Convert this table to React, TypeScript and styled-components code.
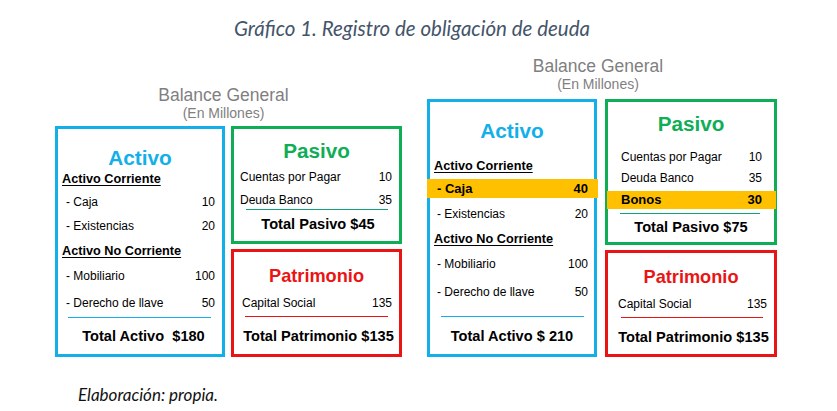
import React from "react";
import styled, { createGlobalStyle } from "styled-components";

const BLUE = "#12afe9";
const GREEN = "#0fae56";
const RED = "#ea1414";
const GOLD = "#ffc000";

const GlobalStyle = createGlobalStyle`
  html, body { margin: 0; padding: 0; background: #ffffff; }
  body { font-family: "Liberation Sans", Arial, sans-serif; color: #000; }
`;

const Page = styled.div`
  width: 837px;
  height: 411px;
  display: flex;
  flex-direction: column;
  overflow: hidden;
`;

const Caption = styled.div`
  margin-top: 16px;
  height: 24px;
  line-height: 24px;
  text-align: center;
  font-family: Lato, "Open Sans", sans-serif;
  font-style: italic;
  font-size: 20.5px;
  color: #44546a;
  padding-right: 13px;
`;

const Figure = styled.div`
  margin-top: 16px;
  display: flex;
  align-items: flex-end;
  padding-left: 55px;
  gap: 25px;
`;

const Balance = styled.div`
  display: flex;
  flex-direction: column;
`;

const Header = styled.div<{ $gap: number; $shift: number }>`
  display: flex;
  flex-direction: column;
  align-items: center;
  margin-bottom: ${(p) => p.$gap}px;
  padding-right: ${(p) => p.$shift}px;
  color: #7f7f7f;
`;

const HeaderTitle = styled.div`
  font-size: 17.5px;
  line-height: 20px;
  height: 20px;
`;

const HeaderSub = styled.div`
  font-size: 14px;
  line-height: 16px;
  height: 16px;
`;

const Boxes = styled.div<{ $gap: number }>`
  display: flex;
  gap: ${(p) => p.$gap}px;
`;

const Column = styled.div`
  display: flex;
  flex-direction: column;
  gap: 5px;
`;

const Box = styled.div<{ $color: string; $w: number; $h: number }>`
  box-sizing: border-box;
  width: ${(p) => p.$w}px;
  height: ${(p) => p.$h}px;
  border: 3px solid ${(p) => p.$color};
  display: flex;
  flex-direction: column;
`;

const BoxTitle = styled.div<{ $color: string; $size: number; $lh: number; $mt: number }>`
  margin-top: ${(p) => p.$mt}px;
  height: ${(p) => p.$lh}px;
  line-height: ${(p) => p.$lh}px;
  font-size: ${(p) => p.$size}px;
  font-weight: 700;
  text-align: center;
  color: ${(p) => p.$color};
`;

const SectionHead = styled.div<{ $mt: number }>`
  margin-top: ${(p) => p.$mt}px;
  padding-left: 4px;
  height: 16px;
  line-height: 16px;
  font-size: 12.7px;
  font-weight: 700;
  text-decoration: underline;
  text-underline-offset: 2px;
`;

const Item = styled.div<{ $mt: number; $pl: number; $pr: number }>`
  margin-top: ${(p) => p.$mt}px;
  padding: 0 ${(p) => p.$pr}px 0 ${(p) => p.$pl}px;
  height: 16px;
  line-height: 16px;
  font-size: 12px;
  display: flex;
  justify-content: space-between;
`;

const Highlight = styled.div<{ $mt: number; $h: number; $ml: number; $mr: number; $pad: number }>`
  margin: ${(p) => p.$mt}px ${(p) => p.$mr}px 0 ${(p) => p.$ml}px;
  padding: 0 ${(p) => p.$pad}px;
  height: ${(p) => p.$h}px;
  line-height: ${(p) => p.$h}px;
  background: ${GOLD};
  font-size: 13px;
  font-weight: 700;
  display: flex;
  justify-content: space-between;
  position: relative;
`;

const Rule = styled.div<{ $color: string; $mt: number; $ml: number; $mr: number }>`
  margin: ${(p) => p.$mt}px ${(p) => p.$mr}px 0 ${(p) => p.$ml}px;
  height: 1px;
  background: ${(p) => p.$color};
`;

const Total = styled.div<{ $mt: number; $shift?: number }>`
  margin-top: ${(p) => p.$mt}px;
  padding-left: ${(p) => p.$shift ?? 0}px;
  height: 18px;
  line-height: 18px;
  font-size: 14.6px;
  font-weight: 700;
  text-align: center;
  white-space: pre;
`;

const Footer = styled.div`
  margin-top: 28px;
  padding-left: 78px;
  height: 20px;
  line-height: 20px;
  font-family: Lato, "Open Sans", sans-serif;
  font-style: italic;
  font-size: 17px;
  color: #111;
`;

const PASIVO_RULE = "#10a37a";

export default function App() {
  return (
    <>
      <GlobalStyle />
      <Page>
        <Caption>Gráfico 1. Registro de obligación de deuda</Caption>
        <Figure>
          <Balance>
            <Header $gap={5} $shift={10}>
              <HeaderTitle>Balance General</HeaderTitle>
              <HeaderSub>(En Millones)</HeaderSub>
            </Header>
            <Boxes $gap={6}>
              <Box $color={BLUE} $w={170} $h={231}>
                <BoxTitle $color={BLUE} $size={20.8} $lh={24} $mt={17}>Activo</BoxTitle>
                <SectionHead $mt={1}>Activo Corriente</SectionHead>
                <Item $mt={7} $pl={8} $pr={7}><span>- Caja</span><span>10</span></Item>
                <Item $mt={8} $pl={8} $pr={7}><span>- Existencias</span><span>20</span></Item>
                <SectionHead $mt={9}>Activo No Corriente</SectionHead>
                <Item $mt={9} $pl={8} $pr={7}><span>- Mobiliario</span><span>100</span></Item>
                <Item $mt={11} $pl={8} $pr={7}><span>- Derecho de llave</span><span>50</span></Item>
                <Rule $color={BLUE} $mt={6} $ml={10} $mr={11} />
                <Total $mt={9} $shift={7}>{"Total Activo  $180"}</Total>
              </Box>
              <Column>
                <Box $color={GREEN} $w={171} $h={118}>
                  <BoxTitle $color={GREEN} $size={20.7} $lh={24} $mt={10}>Pasivo</BoxTitle>
                  <Item $mt={6} $pl={6} $pr={7}><span>Cuentas por Pagar</span><span>10</span></Item>
                  <Item $mt={7} $pl={6} $pr={7}><span>Deuda Banco</span><span>35</span></Item>
                  <Rule $color={PASIVO_RULE} $mt={1} $ml={12} $mr={11} />
                  <Total $mt={5} $shift={3}>Total Pasivo $45</Total>
                </Box>
                <Box $color={RED} $w={171} $h={108}>
                  <BoxTitle $color={RED} $size={18.2} $lh={22} $mt={13}>Patrimonio</BoxTitle>
                  <Item $mt={8} $pl={8} $pr={7}><span>Capital Social</span><span>135</span></Item>
                  <Rule $color={RED} $mt={5} $ml={11} $mr={11} />
                  <Total $mt={10} $shift={4}>Total Patrimonio $135</Total>
                </Box>
              </Column>
            </Boxes>
          </Balance>
          <Balance>
            <Header $gap={7} $shift={8}>
              <HeaderTitle>Balance General</HeaderTitle>
              <HeaderSub>(En Millones)</HeaderSub>
            </Header>
            <Boxes $gap={8}>
              <Box $color={BLUE} $w={170} $h={258}>
                <BoxTitle $color={BLUE} $size={20.8} $lh={24} $mt={17}>Activo</BoxTitle>
                <SectionHead $mt={15}>Activo Corriente</SectionHead>
                <Highlight $mt={5} $h={19} $ml={-3} $mr={-4} $pad={10}><span>- Caja</span><span>40</span></Highlight>
                <Item $mt={8} $pl={7} $pr={6}><span>- Existencias</span><span>20</span></Item>
                <SectionHead $mt={9}>Activo No Corriente</SectionHead>
                <Item $mt={9} $pl={7} $pr={6}><span>- Mobiliario</span><span>100</span></Item>
                <Item $mt={12} $pl={7} $pr={6}><span>- Derecho de llave</span><span>50</span></Item>
                <Rule $color={BLUE} $mt={16} $ml={11} $mr={10} />
                <Total $mt={10}>Total Activo $ 210</Total>
              </Box>
              <Column>
                <Box $color={GREEN} $w={172} $h={146}>
                  <BoxTitle $color={GREEN} $size={20.7} $lh={24} $mt={10}>Pasivo</BoxTitle>
                  <Item $mt={13} $pl={13} $pr={12}><span>Cuentas por Pagar</span><span>10</span></Item>
                  <Item $mt={5} $pl={13} $pr={12}><span>Deuda Banco</span><span>35</span></Item>
                  <Highlight $mt={5} $h={18} $ml={-1} $mr={-2} $pad={14}><span>Bonos</span><span>30</span></Highlight>
                  <Rule $color={PASIVO_RULE} $mt={4} $ml={12} $mr={14} />
                  <Total $mt={4}>Total Pasivo $75</Total>
                </Box>
                <Box $color={RED} $w={172} $h={107}>
                  <BoxTitle $color={RED} $size={18.2} $lh={22} $mt={13}>Patrimonio</BoxTitle>
                  <Item $mt={8} $pl={10} $pr={7}><span>Capital Social</span><span>135</span></Item>
                  <Rule $color={RED} $mt={5} $ml={13} $mr={11} />
                  <Total $mt={10} $shift={5}>Total Patrimonio $135</Total>
                </Box>
              </Column>
            </Boxes>
          </Balance>
        </Figure>
        <Footer>Elaboración: propia.</Footer>
      </Page>
    </>
  );
}
